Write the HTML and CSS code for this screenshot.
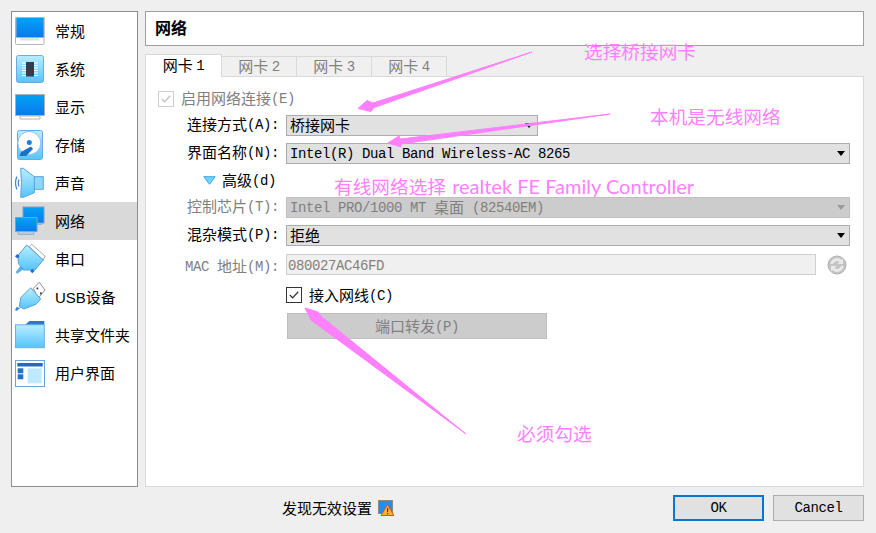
FILE: index.html
```html
<!DOCTYPE html>
<html lang="zh-CN">
<head>
<meta charset="utf-8">
<title>网络</title>
<link rel="stylesheet" href="styles.css">
</head>
<body>
<div class="window">
  <div class="main">
    <nav class="sidebar">
      <div class="item">
        <svg class="icon" viewBox="0 0 32 32">
          <defs>
            <linearGradient id="scr" x1="0" y1="0" x2="0" y2="1"><stop offset="0" stop-color="#00a4f4"/><stop offset="1" stop-color="#0a78ee"/></linearGradient>
            <linearGradient id="lite" x1="0" y1="0" x2="0" y2="1"><stop offset="0" stop-color="#b8eeff"/><stop offset="1" stop-color="#55c4fb"/></linearGradient>
          </defs>
          <rect x="0.500" y="2.500" width="28.500" height="27" rx="1" fill="#fff" stroke="#b4b4b4"/>
          <rect x="1" y="2.500" width="28" height="20" fill="url(#scr)" stroke="#aeb4b8"/>
          <path d="M5 23h19.500v2.500H5z" fill="#e2e2e2"/>
        </svg>
        <span>常规</span>
      </div>
      <div class="item">
        <svg class="icon" viewBox="0 0 32 32">
          <rect x="1.500" y="2.500" width="27" height="27" rx="2" fill="url(#lite)" stroke="#70a8e0"/>
          <path d="M7 10h16M7 12.500h16M7 15h16M7 17.500h16M7 20h16M7 22.500h16" stroke="#fff" stroke-width="1"/>
          <rect x="11" y="9" width="8" height="14.500" fill="#353c4c"/>
        </svg>
        <span>系统</span>
      </div>
      <div class="item">
        <svg class="icon" viewBox="0 0 32 32">
          <rect x="0.500" y="3.500" width="29" height="21" fill="url(#scr)" stroke="#aeb0b2"/>
          <path d="M5 25h20v3H5z" fill="#fff" stroke="#b4b4b4"/>
        </svg>
        <span>显示</span>
      </div>
      <div class="item">
        <svg class="icon" viewBox="0 0 32 32">
          <rect x="2.500" y="1.500" width="25" height="29" rx="2" fill="url(#lite)" stroke="#6aa8e4"/>
          <circle cx="14.300" cy="14" r="11.500" fill="#fff" stroke="#8cc0ee"/>
          <circle cx="14.300" cy="13.500" r="2.500" fill="#1f7fd8"/>
          <path d="M4.500 27l1.500-4 10-5.500 2 2.500-7 7z" fill="#1d6fc8"/>
        </svg>
        <span>存储</span>
      </div>
      <div class="item">
        <svg class="icon" viewBox="0 0 32 32">
          <path d="M19.300 9.700h9v12.600h-9z" fill="#8fd6fb" stroke="#5d9fe0"/>
          <path d="M5.700 1.300h2.600l11 8.400v16l-11 4.600H5.700q1.500-14.500 0-29z" fill="url(#lite)" stroke="#5d9fe0"/>
          <path d="M2 9.500q-3 6.500 0 13M4 12.500q-1.500 3.500 0 7" fill="none" stroke="#3f86cf" stroke-width="1.200"/>
        </svg>
        <span>声音</span>
      </div>
      <div class="item active">
        <svg class="icon" viewBox="0 0 32 32">
          <rect x="8" y="2" width="21" height="16" fill="url(#scr)" stroke="#7f9fc0"/>
          <path d="M10 18h17v2H10z" fill="#9cb8d4"/>
          <rect x="0.500" y="12.500" width="21.500" height="14" fill="url(#scr)" stroke="#7f9fc0"/>
          <path d="M3 26.500h16v3H3z" fill="#b4cbe0" stroke="#7f9fc0" stroke-width="0.600"/>
        </svg>
        <span>网络</span>
      </div>
      <div class="item">
        <svg class="icon" viewBox="0 0 32 32">
          <path d="M16.700 1.300L30 13l-1.700 4L14.300 3.700z" fill="#fff" stroke="#a8a8a8"/>
          <path d="M11.700 2L28.300 17L20 27H8.300L3.300 20.300V12z" fill="url(#lite)" stroke="#5d9fe0"/>
          <path d="M0 13.300l2.300-2.300 2.300 2.300-2.300 2.300zM15 28l2.300-2.300 2.300 2.300-2.300 2.300z" fill="#1f70c8"/>
          <path d="M5 23.700L1 29.300l1.300 1L8.300 26z" fill="#5cb4ee" stroke="#3d8ad8" stroke-width="0.500"/>
        </svg>
        <span>串口</span>
      </div>
      <div class="item">
        <svg class="icon" viewBox="0 0 32 32">
          <path d="M18.300 7.300l6-6L30 9l-6.700 8.300z" fill="#fff" stroke="#8e8e8e"/>
          <path d="M21.500 6.500h1.700v1.700h-1.700zM25 11.500h1.700v1.700H25z" fill="#333"/>
          <path d="M15.700 6.700l10 11.300-4.700 5.300L9 28l-4.700-2.300 1.400-9z" fill="url(#lite)" stroke="#5d9fe0"/>
          <path d="M1.700 25.700L0 29l1.700 1L5 27.300z" fill="#3d8ad8"/>
        </svg>
        <span class="l-mix"><span class="l">USB</span>设备</span>
      </div>
      <div class="item">
        <svg class="icon" viewBox="0 0 32 32">
          <path d="M10 6l4.300-4h15v4z" fill="#2b78cc"/>
          <rect x="0.500" y="5.800" width="28.800" height="22.900" fill="url(#lite)" stroke="#6eaee6"/>
        </svg>
        <span>共享文件夹</span>
      </div>
      <div class="item">
        <svg class="icon" viewBox="0 0 32 32">
          <rect x="0.500" y="3.500" width="29" height="26" fill="#fff" stroke="#6aa4e0"/>
          <rect x="2.300" y="6" width="25.400" height="3.500" fill="#1e6cc8"/>
          <rect x="12.700" y="11.300" width="14" height="15" fill="#bfe9fd"/>
          <rect x="2.700" y="11.300" width="5.600" height="5" fill="#1f72cd"/>
          <rect x="2.700" y="17.300" width="5.600" height="5" fill="#1f72cd"/>
        </svg>
        <span>用户界面</span>
      </div>
    </nav>

    <section class="content">
      <h1 class="title">网络</h1>
      <div class="tabs">
        <div class="tab selected">网卡 <span class="l">1</span></div>
        <div class="tab">网卡 <span class="l">2</span></div>
        <div class="tab">网卡 <span class="l">3</span></div>
        <div class="tab">网卡 <span class="l">4</span></div>
      </div>
      <div class="pane">
        <div class="enable disabled">
          <span class="check off"><svg viewBox="0 0 15 15"><path d="M3 7.500l3 3 6-6.500" fill="none" stroke="#c4c4c4" stroke-width="1.500"/></svg></span>
          <span>启用网络连接<span class="l">(E)</span></span>
        </div>
        <div class="form">
          <label class="lbl">连接方式<span class="l">(A):</span></label>
          <div class="combo short"><span>桥接网卡</span><i class="caret"></i></div>

          <label class="lbl">界面名称<span class="l">(N):</span></label>
          <div class="combo"><span class="l">Intel(R) Dual Band Wireless-AC 8265</span><i class="caret"></i></div>

          <div class="advanced">
            <svg class="tri" viewBox="0 0 13 9"><path d="M0.800 0.700h11.400L6.500 8.300z" fill="#74d4ff" stroke="#39a6ea"/></svg>
            <span>高级<span class="l">(d)</span></span>
          </div>

          <label class="lbl disabled">控制芯片<span class="l">(T):</span></label>
          <div class="combo off"><span><span class="l">Intel PRO/1000 MT </span>桌面<span class="l"> (82540EM)</span></span><i class="caret"></i></div>

          <label class="lbl">混杂模式<span class="l">(P):</span></label>
          <div class="combo"><span>拒绝</span><i class="caret"></i></div>

          <label class="lbl disabled mac-l"><span class="l">MAC </span>地址<span class="l">(M):</span></label>
          <div class="mac-row">
            <div class="mac"><span class="l">080027AC46FD</span></div>
            <svg class="refresh" viewBox="0 0 20 20">
              <circle cx="10" cy="10" r="9" fill="#c4c4c4" stroke="#b0b0b0"/>
              <path d="M3.500 9a6.500 6.500 0 0 1 11-4l1.500-1.500v5.500h-5.500l2-2A4 4 0 0 0 6 9zM16.500 11a6.500 6.500 0 0 1-11 4L4 16.500V11h5.500l-2 2A4 4 0 0 0 14 11z" fill="#e9e9e9"/>
            </svg>
          </div>

          <div class="cable">
            <span class="check"><svg viewBox="0 0 15 15"><path d="M3 7.500l3 3 6-6.500" fill="none" stroke="#333" stroke-width="1.300"/></svg></span>
            <span>接入网线<span class="l">(C)</span></span>
          </div>

          <div class="forward">端口转发<span class="l">(P)</span></div>
        </div>
      </div>
    </section>
  </div>

  <footer class="footer">
    <div class="warn">
      <span>发现无效设置</span>
      <svg class="warn-icon" viewBox="0 0 16 16">
        <rect x="0.500" y="0.500" width="14" height="13" fill="#1e90ec" stroke="#8a8a8a"/>
        <path d="M9.500 4.500L16 15.500H3z" fill="#f9b233" stroke="#d8541c"/>
        <path d="M9 8h1.200v4H9zM9 13h1.200v1.200H9z" fill="#7a2a10"/>
      </svg>
    </div>
    <button class="btn default" type="button"><span class="l">OK</span></button>
    <button class="btn" type="button"><span class="l">Cancel</span></button>
  </footer>
</div>

<svg class="arrows" viewBox="0 0 876 533">
  <path d="M532 52L373 103L367 100.500L358 108.500L371 111.500L374 107.500Z"/>
  <path d="M610 114L400 139L399 136L388 143L401 147L401 144Z"/>
  <path d="M466 434L322 317L318 312L305 308L311 320L315 323Z"/>
</svg>
<div class="note n1">选择桥接网卡</div>
<div class="note n2">本机是无线网络</div>
<div class="note n3">有线网络选择 <span class="note-l">realtek FE Family Controller</span></div>
<div class="note n4">必须勾选</div>
</body>
</html>
```

FILE: styles.css
```css
* { box-sizing: border-box; }
html, body { margin: 0; padding: 0; }
body {
  width: 876px;
  height: 533px;
  overflow: hidden;
  background: #efefef;
  color: #000;
  font-family: "Noto Sans CJK SC", sans-serif;
  font-size: 15px;
  line-height: 20px;
  position: relative;
}
.l {
  font-family: "Liberation Mono", monospace;
  font-size: 14px;
  letter-spacing: -0.4px;
  vertical-align: 1px;
}
.window {
  height: 533px;
  padding: 11px 12px 12px 11px;
  display: flex;
  flex-direction: column;
}
.main { display: flex; gap: 7px; height: 476px; }

/* sidebar */
.sidebar {
  width: 127px;
  background: #fff;
  border: 1px solid #8b8b90;
  display: flex;
  flex-direction: column;
}
.item {
  height: 38px;
  display: flex;
  align-items: center;
  gap: 8px;
  padding-left: 3px;
  white-space: nowrap;
}
.item.active { background: #d9d9d9; }
.item .l {
  font-size: 15px;
  letter-spacing: 0;
  vertical-align: 0;
  font-family: "Liberation Sans", sans-serif;
}
.icon { width: 32px; height: 32px; flex: none; }

/* content */
.content { flex: 1; display: flex; flex-direction: column; min-width: 0; }
.title {
  margin: 0;
  height: 35px;
  background: #fff;
  border: 1px solid #a0a0a0;
  padding-left: 9px;
  font-size: 16px;
  font-weight: 700;
  line-height: 31px;
}
.tabs {
  display: flex;
  height: 23px;
  margin-top: 8px;
  align-items: flex-end;
  position: relative;
  z-index: 1;
}
.tab {
  width: 75px;
  height: 21px;
  background: #f0f0f0;
  border: 1px solid #d9d9d9;
  border-left: 0;
  color: #808080;
  text-align: center;
  line-height: 18px;
  white-space: pre;
}
.tab.selected {
  width: 77px;
  height: 23px;
  background: #fff;
  color: #000;
  border-left: 1px solid #d9d9d9;
  border-bottom: 0;
  line-height: 20px;
}
.pane {
  flex: 1;
  margin-top: -1px;
  background: #fff;
  border: 1px solid #d9d9d9;
  padding-top: 12px;
}
.enable {
  display: flex;
  align-items: center;
  gap: 7px;
  height: 19px;
  padding-left: 12px;
}
.disabled { color: #808080; }
.check {
  width: 16px;
  height: 16px;
  flex: none;
  border: 1px solid #333;
  background: #fff;
  display: block;
}
.check svg { display: block; width: 14px; height: 14px; }
.check.off { border-color: #cfcfcf; }

.form {
  margin-top: 7px;
  display: grid;
  grid-template-columns: 133px 1fr;
  grid-template-rows: 21px 21px 19px 21px 21px 21px 21px 26px;
  row-gap: 7px;
  column-gap: 7px;
  padding-right: 13px;
}
.lbl {
  text-align: right;
  line-height: 18px;
  white-space: pre;
}
.combo {
  position: relative;
  height: 21px;
  background: #e1e1e1;
  border: 1px solid #adadad;
  padding-left: 3px;
  line-height: 17px;
  white-space: pre;
}
.combo.short { width: 252px; }
.combo.off { background: #cccccc; border-color: #bfbfbf; color: #808080; }
.caret {
  position: absolute;
  right: 4px;
  top: 7px;
  width: 0;
  height: 0;
  border-left: 4px solid transparent;
  border-right: 4px solid transparent;
  border-top: 5px solid #000;
}
.combo.off .caret { border-top-color: #9a9a9a; }
.advanced {
  grid-column: 1 / 3;
  display: flex;
  align-items: center;
  gap: 6px;
  padding-left: 57px;
  height: 19px;
}
.tri { width: 13px; height: 9px; flex: none; }
.mac-l { margin-top: 4px; }
.mac-row {
  display: flex;
  align-items: center;
  gap: 11px;
  margin-top: 2px;
}
.mac {
  width: 530px;
  height: 21px;
  background: #f0f0f0;
  border: 1px solid #cfcfcf;
  color: #808080;
  padding-left: 1px;
  line-height: 19px;
}
.refresh { width: 20px; height: 20px; flex: none; }
.cable {
  grid-column: 2;
  display: flex;
  align-items: center;
  gap: 7px;
  margin-top: 6px;
  height: 16px;
}
.forward {
  grid-column: 2;
  width: 260px;
  height: 26px;
  margin-left: 1px;
  margin-top: 4px;
  background: #cccccc;
  border: 1px solid #bfbfbf;
  color: #808080;
  text-align: center;
  line-height: 24px;
}

/* footer */
.footer {
  display: flex;
  align-items: center;
  margin-top: 8px;
  height: 26px;
}
.warn {
  display: flex;
  align-items: center;
  gap: 6px;
  margin-left: 271px;
  margin-right: auto;
}
.warn-icon { width: 16px; height: 16px; flex: none; }
.btn {
  width: 91px;
  height: 26px;
  margin: 0 0 0 9px;
  padding: 0 0 2px;
  background: #e1e1e1;
  border: 1px solid #adadad;
  color: #000;
  font: inherit;
  line-height: 20px;
}
.btn.default { border: 2px solid #0078d7; }

/* annotations drawn over the window */
.arrows {
  position: absolute;
  left: 0;
  top: 0;
  width: 876px;
  height: 533px;
  fill: #ff80ff;
  stroke: #ff80ff;
  stroke-width: 1;
  pointer-events: none;
}
.note {
  position: absolute;
  color: #ff80ff;
  font-size: 18.67px;
  line-height: 20px;
  white-space: pre;
}
.note-l {
  font-family: "Lato", sans-serif;
  font-size: 20px;
  margin-left: 2px;
}
.n1 { left: 584px; top: 41px; }
.n2 { left: 650px; top: 106px; }
.n3 { left: 334px; top: 176px; }
.n4 { left: 517px; top: 423px; }
```
